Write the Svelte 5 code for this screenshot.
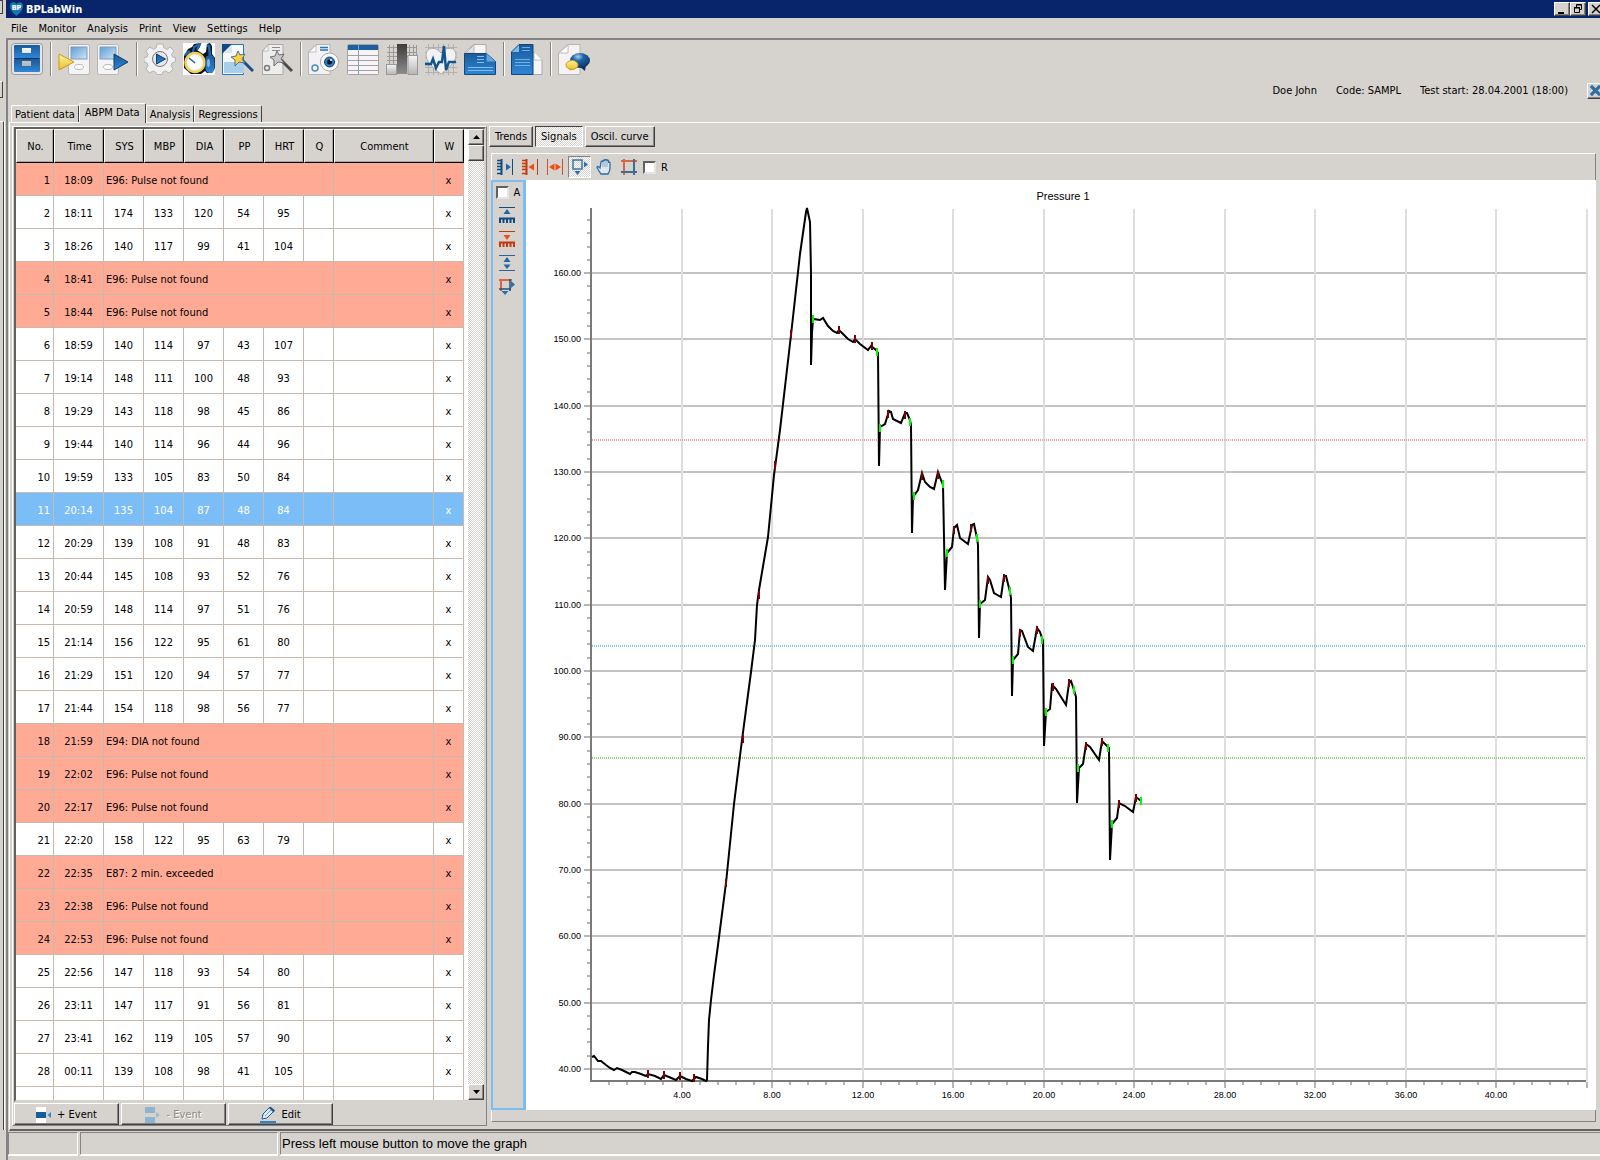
<script lang="ts">
	type Row = {
		no: number;
		time: string;
		values?: number[];
		error?: string;
	};

	const menu = ['File', 'Monitor', 'Analysis', 'Print', 'View', 'Settings', 'Help'];
	const pages = ['Patient data', 'ABPM Data', 'Analysis', 'Regressions'];
	const views = ['Trends', 'Signals', 'Oscil. curve'];
	const numeric = ['SYS', 'MBP', 'DIA', 'PP', 'HRT'];
	const toolbar = [
		'cabinet', '|', 'import', 'export', '|', 'settings', 'monitor', 'wizard', 'wizardGray', '|',
		'preview', 'table', 'histogram', 'signal', 'printout', '|', 'documents', '|', 'comments'
	];

	const notFound = 'E96: Pulse not found';

	const rows: Row[] = [
		{ no: 1, time: '18:09', error: notFound },
		{ no: 2, time: '18:11', values: [174, 133, 120, 54, 95] },
		{ no: 3, time: '18:26', values: [140, 117, 99, 41, 104] },
		{ no: 4, time: '18:41', error: notFound },
		{ no: 5, time: '18:44', error: notFound },
		{ no: 6, time: '18:59', values: [140, 114, 97, 43, 107] },
		{ no: 7, time: '19:14', values: [148, 111, 100, 48, 93] },
		{ no: 8, time: '19:29', values: [143, 118, 98, 45, 86] },
		{ no: 9, time: '19:44', values: [140, 114, 96, 44, 96] },
		{ no: 10, time: '19:59', values: [133, 105, 83, 50, 84] },
		{ no: 11, time: '20:14', values: [135, 104, 87, 48, 84] },
		{ no: 12, time: '20:29', values: [139, 108, 91, 48, 83] },
		{ no: 13, time: '20:44', values: [145, 108, 93, 52, 76] },
		{ no: 14, time: '20:59', values: [148, 114, 97, 51, 76] },
		{ no: 15, time: '21:14', values: [156, 122, 95, 61, 80] },
		{ no: 16, time: '21:29', values: [151, 120, 94, 57, 77] },
		{ no: 17, time: '21:44', values: [154, 118, 98, 56, 77] },
		{ no: 18, time: '21:59', error: 'E94: DIA not found' },
		{ no: 19, time: '22:02', error: notFound },
		{ no: 20, time: '22:17', error: notFound },
		{ no: 21, time: '22:20', values: [158, 122, 95, 63, 79] },
		{ no: 22, time: '22:35', error: 'E87: 2 min. exceeded' },
		{ no: 23, time: '22:38', error: notFound },
		{ no: 24, time: '22:53', error: notFound },
		{ no: 25, time: '22:56', values: [147, 118, 93, 54, 80] },
		{ no: 26, time: '23:11', values: [147, 117, 91, 56, 81] },
		{ no: 27, time: '23:41', values: [162, 119, 105, 57, 90] },
		{ no: 28, time: '00:11', values: [139, 108, 98, 41, 105] }
	];

	let page = $state('ABPM Data');
	let view = $state('Signals');
	let selected = $state(11);
	let autoY = $state(false);
	let rMode = $state(false);

	// Chart geometry, in viewBox units
	const left = 592;
	const right = 1586;
	const top = 209;
	const bottom = 1081;
	const px = (sec: number) => Math.round(591 + sec * 22.625);
	const py = (mm: number) => Math.round(1069 - (mm - 40) * 6.633);

	const yMajor = Array.from({ length: 13 }, (_, i) => 40 + i * 10);
	const yMinor = Array.from({ length: 65 }, (_, i) => 40 + i * 2).filter((v) => v % 10 !== 0 && v <= 168);
	const xMajor = Array.from({ length: 11 }, (_, i) => 4 + i * 4);
	const xMinor = Array.from({ length: 55 }, (_, i) => i + 1).filter((i) => i % 5 !== 0).map((i) => i * 0.8);

	const limits = [
		{ y: 440, color: '#ff9db0' },
		{ y: 646, color: '#86c8e6' },
		{ y: 758, color: '#9bd07c' }
	];

	const trace =
		'592,1057 594,1056 598,1061 601,1061 606,1065 610,1068 614,1070 617,1068 622,1070 630,1074 632,1072 635,1072 641,1074 646,1076 648,1074 655,1076 661,1079 664,1075 669,1077 676,1080 680,1076 686,1079 692,1081 696,1077 702,1079 706,1081 707,1080 ' +
		'708,1046 709,1020 711,1000 714,975 718,945 726,883 734,804 742,740 751,672 755,640 757,605 759,590 768,537 774,475 780,430 791,335 800,254 806,212 807,208 810,222 811,273 811,365 812,333 813,319 ' +
		'820,320 823,318 828,326 833,331 837,333 839,330 842,333 848,339 853,342 855,339 860,344 868,350 871,346 876,350 878,353 879,466 880,427 ' +
		'885,424 889,411 891,412 893,419 901,423 905,413 907,413 910,420 911,425 912,533 913,497 918,490 922,473 925,482 930,487 934,489 938,472 941,480 943,485 945,590 947,553 ' +
		'952,547 954,528 957,525 960,538 968,544 972,525 974,524 977,538 978,545 979,638 980,604 985,600 988,577 990,580 994,593 1001,597 1004,576 1006,576 1010,592 1011,598 1012,696 1013,660 ' +
		'1018,654 1020,630 1022,631 1028,647 1033,651 1037,628 1040,632 1043,641 1044,746 1046,712 1050,709 1052,685 1056,689 1066,705 1069,683 1071,681 1074,690 1076,697 1077,803 1079,768 ' +
		'1083,764 1086,744 1090,747 1099,760 1102,741 1107,746 1109,748 1110,860 1112,824 1117,818 1119,803 1125,806 1133,812 1136,797 1141,801';

	const peaks = [
		[648, 1074], [664, 1075], [680, 1076], [694, 1078], [726, 883], [743, 739], [759, 595], [775, 465], [791, 334],
		[839, 330], [855, 339], [872, 346], [888, 414], [905, 415], [922, 476], [938, 475], [954, 530], [971, 528],
		[988, 580], [1004, 578], [1020, 633], [1037, 630], [1053, 687], [1069, 683], [1086, 746], [1102, 742],
		[1119, 804], [1136, 798]
	];

	const steps = [
		[813, 319], [877, 352], [880, 428], [910, 422], [914, 496], [943, 484], [947, 553], [977, 538], [980, 604],
		[1010, 591], [1013, 660], [1042, 640], [1046, 712], [1074, 690], [1078, 768], [1108, 748], [1112, 824], [1141, 801]
	];
</script>

<svelte:head><title>BPLabWin</title></svelte:head>

{#snippet icon(name: string)}
	<svg class="icon" viewBox="0 0 32 32" aria-hidden="true">
		{#if name === 'cabinet'}
			<rect x="0.5" y="0.5" width="31" height="31" rx="3" fill="#e4e4e4" stroke="#9a9a9a" />
			<rect x="3" y="2" width="26" height="13" rx="1" fill="url(#blue)" />
			<rect x="3" y="16" width="26" height="13" rx="1" fill="url(#blue)" />
			<path d="M11 5h9v5h-9zM11 18h9v5h-9z" fill="url(#silver)" />
			<path d="M3 15.500h26" stroke="#052f5c" />
		{:else if name === 'import' || name === 'export'}
			<g transform={name === 'import' ? 'translate(10 0)' : ''}>
				<rect x="0.500" y="1.500" width="21" height="30" rx="2" fill="#f4f3f5" stroke="#b5b5b8" />
				<rect x="3" y="4" width="16" height="12" fill="url(#screen)" stroke="#7f9bb8" />
				<ellipse cx="11" cy="24" rx="4.500" ry="2.500" fill="#fff" stroke="#bbb" />
			</g>
			{#if name === 'import'}
				<path d="M1 11v16l15-8z" fill="url(#gold)" stroke="#c79a1c" stroke-linejoin="round" />
			{:else}
				<path d="M17 11v16l14-8z" fill="url(#blue)" stroke="#0a3d72" stroke-linejoin="round" />
			{/if}
		{:else if name === 'settings'}
			<path
				d="M13 1h6l1 4 3 1.500L26 4l4 4-2.500 3.500 1 2.500 3 .5v4l-3.500 1.500-1 2.500 2 3.500-4 4-3.500-2-2.500 1-1 2.500h-5l-1.500-2.500-2.500-1-3.500 2-3.500-4 2-3.500-1-2.500-3-1.500v-4l3-.5 1-2.500L2 8l4-4 3.500 2.500L12 5z"
				fill="#f1f0f2" stroke="#b5b5b6"
			/>
			<circle cx="16" cy="16" r="7.500" fill="#e8e8ea" stroke="#77797c" />
			<path d="M12.500 11v10l9-5z" fill="url(#blue)" stroke="#0a3d72" />
		{:else if name === 'monitor'}
			<path d="M0 0h32v32H0z" fill="#fff" />
			<path d="M1 13l4-7 4-2 2-3 7-1-1 4-3 3 6 4 3-2 1-8 3-1 2 3v8l3 4v10l-3 5h-5l-2-2-4 3H8l-7-6z" fill="#081222" />
			<path d="M10 9l1-5 6-3-3 6" fill="none" stroke="#1f6bb0" stroke-width="2" />
			<path d="M24 2l2 1 1 10M2 12l5-4" fill="none" stroke="#1f6bb0" stroke-width="2.500" />
			<circle cx="12" cy="19.500" r="9.500" fill="#eef4fa" stroke="#f3cf52" stroke-width="2.500" />
			<circle cx="12" cy="19.500" r="6.500" fill="#fff" />
			<path d="M6 15l6 5" stroke="#2e5c8a" stroke-width="1.500" />
			<rect x="22.500" y="12" width="9" height="18" rx="4.500" fill="url(#blue)" />
			<ellipse cx="25.500" cy="20" rx="1.500" ry="4" fill="#7db8ea" />
		{:else if name === 'wizard' || name === 'wizardGray'}
			{@const on = name === 'wizard'}
			<path d={on ? 'M.5 1.500h21v30H.5z' : 'M7 1.500h15v30H1.500V8z'} fill={on ? '#f7f8fb' : '#ededee'} stroke={on ? '#2a76b8' : '#a9a9aa'} />
			{#if on}
				<path d="M0 1h10L1 10H0z" fill="#0f4a85" />
				<path d="M10 2v8H2z" fill="#dde3ea" />
				<path d="M2 19h20v11H2z" fill="#a9cdec" />
			{:else}
				<path d="M7 2v6H2z" fill="#fff" stroke="#bbb" />
				<path d="M11 4.500h8M11 7.500h8" stroke="#8b8b8b" />
				<circle cx="6" cy="25" r="2.500" fill="none" stroke="#7b7b7b" stroke-width="1.500" />
			{/if}
			<path d="M20 17l11 11" stroke={on ? '#174f88' : '#4b4b4b'} stroke-width="3" />
			<path
				d="M16 8l2 4 5-1-3 5 3 4-6-1-4 4v-6l-4-3 5-1z"
				fill={on ? '#f6d23e' : '#c9c9c9'} stroke={on ? '#56718a' : '#6e6e6e'}
			/>
		{:else if name === 'preview'}
			<path d="M8 1.500h14v30H.5V9z" fill="#f3f1f4" stroke="#b5b5b8" />
			<path d="M8 2v7H1z" fill="#fff" stroke="#bcbcbc" />
			<path d="M12 4.500h8M12 7h8" stroke="#2a76b0" stroke-width="1.500" />
			<circle cx="7" cy="25" r="3" fill="none" stroke="#4c8fc0" stroke-width="1.500" />
			<circle cx="21.500" cy="19" r="9" fill="#fff" stroke="#aaa" />
			<circle cx="21.500" cy="19" r="5" fill="#2f7fc0" stroke="#0f3f70" />
			<circle cx="21.500" cy="19" r="2.500" fill="#0a1620" />
			<circle cx="23" cy="17" r="1" fill="#fff" />
		{:else if name === 'table'}
			<rect x="0.500" y="1.500" width="31" height="30" rx="1" fill="#f6f4f6" stroke="#a3a3a6" />
			<path d="M1 2h30v5H1z" fill="#1c609f" />
			<path d="M1 12.500h30M1 17.500h30M1 22.500h30M1 27.500h30" stroke="#a3a3a6" />
			<path d="M11.500 2v29" stroke="#8ca0b4" />
		{:else if name === 'histogram'}
			<path d="M3.500 2v22M7.500 2v22M23.500 2v12M27.500 2v12M30.500 2v12M1 4.500h30M1 9.500h30M1 13.500h30M1 17.500h10" stroke="#9c9a98" />
			<rect x="0.500" y="21.500" width="10" height="10" fill="url(#silver)" stroke="#999" />
			<rect x="22" y="12.500" width="9.500" height="19" fill="url(#silver)" stroke="#999" />
			<rect x="11" y="1" width="10" height="30" fill="url(#dark)" />
		{:else if name === 'signal'}
			<path d="M3.500 1v31M8.500 1v31M13.500 1v31M18.500 1v31M23.500 1v31M28.500 1v31M0 4.500h32M0 9.500h32M0 14.500h32M0 19.500h32M0 24.500h32M0 29.500h32" stroke="#b3b0ad" />
			<path d="M16 31C5 23 1 17 1 12c0-8 10-9 15-2 5-7 15-6 15 2 0 5-4 11-15 19z" fill="#f2f2f4" stroke="#aaa" />
			<path d="M0 21h6l2-5 3 9 3-6h3l2-16 2 24 3-8h7" fill="none" stroke="#11568f" stroke-width="2.500" />
		{:else if name === 'printout'}
			<path d="M10 1.500h12v12H1V9z" fill="#f6f5f7" stroke="#aaa" />
			<path d="M10 2v8H2z" fill="#e3e3e6" stroke="#bbb" />
			<path d="M.5 10.500h22l9 8v13H.5z" fill="url(#blue)" stroke="#11477c" />
			<path d="M22.500 10.500v8h9z" fill="#5fa7de" />
			<path d="M13 13.500h7M13 16.500h7M13 19.500h7M4 24.500h25M4 27.500h25" stroke="#7cc0f0" />
		{:else if name === 'documents'}
			<path d="M18 9h5l8 8v14.500H18z" fill="#f6f5f7" stroke="#aaa" />
			<path d="M23 9v8h8" fill="#fff" stroke="#bbb" />
			<path d="M8 1.500h14v30H.5V9z" fill="url(#blue)" stroke="#11477c" />
			<path d="M8 2v7H1z" fill="#7fb9e6" />
			<path d="M11 4.500h8M11 7.500h8M4 16.500h15M4 19.500h15M4 22.500h15" stroke="#6db2e6" />
		{:else if name === 'comments'}
			<path d="M10 1.500h12v30H.5V10z" fill="#f4f2f5" stroke="#b5b5b8" />
			<path d="M10 2v8H1z" fill="#fff" stroke="#bcbcbc" />
			<path d="M28 22l-1 6-5-4z" fill="#0d3766" />
			<ellipse cx="22" cy="17.500" rx="10" ry="7.500" fill="url(#ball)" />
			<path d="M11 24l1 4 4-4z" fill="#d9a914" />
			<ellipse cx="14" cy="22" rx="6" ry="4.500" fill="url(#gold)" stroke="#c79a1c" />
		{/if}
	</svg>
{/snippet}

{#snippet small(name: string)}
	<svg class="small-icon" viewBox="0 0 16 16" aria-hidden="true">
		{#if name === 'xLeft' || name === 'xRight'}
			{@const c = name === 'xLeft' ? '#0f4a80' : '#c8370a'}
			<path d="M0 1.500h5M0 4.500h5M0 7.500h5M0 10.500h5M0 14.500h5" stroke={c} stroke-width="1.500" />
			<path d="M4.500 0v16" stroke={c} stroke-width="2" />
			<path d="M15.500 0v16" stroke={c} />
			{#if name === 'xLeft'}
				<path d="M9 4.500v7l5-3.500z" fill="#1d68ad" />
			{:else}
				<path d="M12 4.500v7L6.500 8z" fill="#f04d10" />
			{/if}
		{:else if name === 'xFit'}
			<path d="M.5 0v16M15.500 0v16" stroke="#d2512c" />
			<path d="M7.500 4.500v7L2 8zM8.500 4.500v7L14 8z" fill="#f04d10" />
		{:else if name === 'move'}
			<rect x="1" y="1" width="9" height="9" fill="none" stroke="#3777ad" stroke-width="1.500" />
			<path d="M12 2.500v6L16 5.500zM2.500 12h6L5.500 16z" fill="#2b70ad" />
		{:else if name === 'hand'}
			<path
				d="M4 9L2 7.500C1 7.500.8 8.500 1.500 9.500L5 15h7c1.500-2 2-4 2-6V4c0-1-1.500-1-1.500 0V2c0-1-1.700-1-1.700 0V1c0-1-1.800-1-1.800 0v1C9 1 7 1 7 2v1c0-1-2-1-2 0z"
				fill="#dfe6ec" stroke="#2f6ea5" stroke-width="1.300"
			/>
			<path d="M7 3v5M9 2v6M11 2v6" stroke="#6f9cc2" stroke-width="0.800" />
		{:else if name === 'crop'}
			<path d="M3 0v16M0 2h16" stroke="#d4664a" stroke-width="2" />
			<path d="M13 0v16M0 13h16" stroke="#3c6d98" stroke-width="2" />
		{:else if name === 'yTop' || name === 'yBottom'}
			{@const c = name === 'yTop' ? '#0f4a80' : '#c8370a'}
			<path d="M0 .5h16" stroke={c} />
			<path d="M1 11v5M4.500 11v5M8 11v5M11.500 11v5M15 11v5" stroke={c} stroke-width="2" />
			<path d="M0 11.500h16" stroke={c} stroke-width="2" />
			<path d={name === 'yTop' ? 'M4.500 7h7L8 2z' : 'M4.500 4h7L8 9z'} fill={name === 'yTop' ? '#1d68ad' : '#f04d10'} />
		{:else if name === 'yFit'}
			<path d="M0 .5h16M0 15.500h16" stroke="#31628f" />
			<path d="M4.500 7h7L8 2zM4.500 9.500h7L8 14z" fill="#1d68ad" />
		{:else if name === 'zoomMove'}
			<path d="M2 0v12M0 1h13" stroke="#d4664a" stroke-width="2" />
			<path d="M11 0v12M0 10h12" stroke="#274f76" stroke-width="1.500" />
			<path d="M12 2v7L16 5.500zM2.500 12h7L6 16z" fill="#2b70ad" />
		{:else if name === 'addEvent'}
			<path d="M0 0h10v5H0zM0 11h10v5H0z" fill="#fff" />
			<path d="M0 5h10v6H0z" fill="#155d9c" />
			<path d="M15 5v6l-3.500-3z" fill="#3e87c3" />
		{:else if name === 'removeEvent'}
			<path d="M0 0h10v6H0zM0 10h10v6H0z" fill="#8fb4d2" />
			<path d="M15 8l-4-3v6z" fill="#9dbbd3" />
		{:else if name === 'edit'}
			<path d="M0 15h16" stroke="#2f83c8" stroke-width="2" />
			<path d="M2 12l1-5 7-7 4 4-7 7z" fill="#dfeaf4" stroke="#1d5c96" />
			<path d="M9 1l2-1 4 3.500-1.500 2z" fill="#15548f" />
			<path d="M5 9l6-6" stroke="#6ca0cf" />
		{/if}
	</svg>
{/snippet}

<!-- Shared gradients -->
<svg class="defs" width="0" height="0" aria-hidden="true">
	<defs>
		<linearGradient id="blue" x1="0" y1="0" x2="0" y2="1">
			<stop offset="0" stop-color="#1a5a98" />
			<stop offset="1" stop-color="#2f86d6" />
		</linearGradient>
		<linearGradient id="screen" x1="0" y1="0" x2="1" y2="1">
			<stop offset="0" stop-color="#5f9fd6" />
			<stop offset="1" stop-color="#cfe4f6" />
		</linearGradient>
		<linearGradient id="gold" x1="0" y1="0" x2="0" y2="1">
			<stop offset="0" stop-color="#fff0a0" />
			<stop offset="1" stop-color="#eebf22" />
		</linearGradient>
		<linearGradient id="silver" x1="0" y1="0" x2="0" y2="1">
			<stop offset="0" stop-color="#f6f6f6" />
			<stop offset="1" stop-color="#b4b4b4" />
		</linearGradient>
		<linearGradient id="dark" x1="0" y1="0" x2="0" y2="1">
			<stop offset="0" stop-color="#3c3c3c" />
			<stop offset="1" stop-color="#8c8c8c" />
		</linearGradient>
		<radialGradient id="ball" cx="0.4" cy="0.25" r="0.8">
			<stop offset="0" stop-color="#a9d0f0" />
			<stop offset="0.35" stop-color="#1f64a6" />
			<stop offset="1" stop-color="#0b315c" />
		</radialGradient>
	</defs>
</svg>

<div class="desktop">
	<!-- edge of the window behind -->
	<div class="behind">
		<div class="stub"></div>
		<div class="stub second"></div>
		<div class="edge"></div>
	</div>

	<div class="window">
		<header class="title-bar">
			<svg class="logo" viewBox="0 0 13 14" aria-hidden="true">
				<path d="M6.500 14C2 10 0 7 0 4c0-4 4-5 6.500-2C9 -1 13 0 13 4c0 3-2 6-6.500 10z" fill="#1678b4" />
				<path d="M2 3h9v5H2z" fill="#5db4de" opacity="0.5" />
				<text x="6.500" y="8" text-anchor="middle">BP</text>
			</svg>
			<h1>BPLabWin</h1>
			<div class="window-buttons">
				<button class="raised" aria-label="Minimize">
					<svg viewBox="0 0 12 10"><path d="M2 8h6v2H2z" /></svg>
				</button>
				<button class="raised" aria-label="Restore">
					<svg viewBox="0 0 12 10"><path d="M4.500 3V.5h5v5H7.500M4 1h6M2.500 3.500h5v5h-5zM2 4h6" fill="none" stroke="#000" /></svg>
				</button>
				<button class="raised close" aria-label="Close">
					<svg viewBox="0 0 12 10"><path d="M2 1l8 8M10 1L2 9" stroke="#000" stroke-width="1.500" /></svg>
				</button>
			</div>
		</header>

		<nav class="menu">
			{#each menu as item}
				<button>{item}</button>
			{/each}
		</nav>

		<div class="body">
			<div class="toolbar">
				{#each toolbar as name}
					{#if name === '|'}
						<span class="sep"></span>
					{:else}
						<button aria-label={name}>{@render icon(name)}</button>
					{/if}
				{/each}
			</div>

			<div class="patient">
				<span>Doe John</span>
				<span>Code: SAMPL</span>
				<span>Test start: 28.04.2001 (18:00)</span>
				<button class="raised" aria-label="Close test">
					<svg viewBox="0 0 14 14"><path d="M2 2l10 10M12 2L2 12" stroke="#2a6fa8" stroke-width="3.500" /></svg>
				</button>
			</div>

			<div class="tabs" role="tablist">
				{#each pages as p}
					<button role="tab" aria-selected={page === p} class:active={page === p} onclick={() => (page = p)}>{p}</button>
				{/each}
			</div>

			<main class="panel">
				<section class="list">
					<div class="listbox">
						<div class="table-wrap">
							<table>
								<colgroup>
									<col class="c-no" />
									<col class="c-time" />
									{#each numeric as n}<col class="c-num" />{/each}
									<col class="c-q" />
									<col class="c-comment" />
									<col class="c-w" />
								</colgroup>
								<thead>
									<tr>
										<th>No.</th>
										<th>Time</th>
										{#each numeric as n}<th>{n}</th>{/each}
										<th>Q</th>
										<th>Comment</th>
										<th>W</th>
									</tr>
								</thead>
								<tbody>
									{#each rows as r (r.no)}
										<tr class:error={r.error} class:selected={r.no === selected} onclick={() => (selected = r.no)}>
											<td class="no">{r.no}</td>
											<td>{r.time}</td>
											{#if r.values}
												{#each r.values as v}<td>{v}</td>{/each}
												<td></td>
											{:else}
												<td class="message" colspan="6">{r.error}</td>
											{/if}
											<td></td>
											<td>x</td>
										</tr>
									{/each}
									<tr>
										{#each { length: 10 } as _}<td></td>{/each}
									</tr>
								</tbody>
							</table>
						</div>
						<div class="scrollbar">
							<button class="raised" aria-label="Scroll up"><svg viewBox="0 0 7 4"><path d="M0 4h7L3.500 0z" /></svg></button>
							<div class="thumb raised"></div>
							<div class="track"></div>
							<button class="raised" aria-label="Scroll down"><svg viewBox="0 0 7 4"><path d="M0 0h7L3.500 4z" /></svg></button>
						</div>
					</div>
					<div class="event-buttons">
						<button class="raised">{@render small('addEvent')} + Event</button>
						<button class="raised" disabled>{@render small('removeEvent')} - Event</button>
						<button class="raised">{@render small('edit')} Edit</button>
					</div>
				</section>

				<section class="graph">
					<div class="views" role="tablist">
						{#each views as v}
							<button role="tab" aria-selected={view === v} class="raised" class:pressed={view === v} onclick={() => (view = v)}>{v}</button>
						{/each}
					</div>

					<div class="graph-panel">
						<div class="graph-tools">
							<button aria-label="Move left edge">{@render small('xLeft')}</button>
							<button aria-label="Move right edge">{@render small('xRight')}</button>
							<button aria-label="Fit width">{@render small('xFit')}</button>
							<button aria-label="Move graph" class="down">{@render small('move')}</button>
							<button aria-label="Pan">{@render small('hand')}</button>
							<button aria-label="Select area">{@render small('crop')}</button>
							<label><input type="checkbox" bind:checked={rMode} />R</label>
						</div>

						<div class="graph-area">
							<aside>
								<label><input type="checkbox" bind:checked={autoY} />A</label>
								<button aria-label="Move top edge">{@render small('yTop')}</button>
								<button aria-label="Move bottom edge">{@render small('yBottom')}</button>
								<button aria-label="Fit height">{@render small('yFit')}</button>
								<button aria-label="Zoom and move">{@render small('zoomMove')}</button>
							</aside>

							<div class="plot">
								<svg viewBox="526 180 1070 930" preserveAspectRatio="xMinYMin meet" role="img" aria-label="Pressure 1">
									<text class="chart-title" x="1063" y="200" text-anchor="middle">Pressure 1</text>

									{#each yMajor as v}
										<line class="grid-h" x1={left} x2={right} y1={py(v)} y2={py(v)} />
										<line class="tick" x1="584" x2="590" y1={py(v)} y2={py(v)} />
										<text class="label" x="581" y={py(v) + 3} text-anchor="end">{v.toFixed(2)}</text>
									{/each}
									{#each yMinor as v}
										<line class="tick" x1="587" x2="590" y1={py(v)} y2={py(v)} />
									{/each}
									{#each xMajor as v}
										<line class="grid-v" x1={px(v)} x2={px(v)} y1={top} y2={bottom} />
										<line class="tick" x1={px(v)} x2={px(v)} y1="1082" y2="1088" />
										{#if v < 44}
											<text class="label" x={px(v)} y="1098" text-anchor="middle">{v.toFixed(2)}</text>
										{/if}
									{/each}
									{#each xMinor as v}
										<line class="tick" x1={px(v)} x2={px(v)} y1="1082" y2="1085" />
									{/each}

									{#each limits as l}
										<line class="limit" x1={left} x2={right} y1={l.y} y2={l.y} stroke={l.color} />
									{/each}

									<path class="axis" d="M591 208V1081H1586" />
									<polyline class="trace" points={trace} />
									{#each peaks as [x, y]}
										<rect x={x - 1} y={y - 4} width="2" height="8" fill="#7b0000" />
									{/each}
									{#each steps as [x, y]}
										<rect x={x - 1} y={y - 4} width="2" height="8" fill="#00f700" />
									{/each}
								</svg>
							</div>
						</div>
						<div class="graph-foot"></div>
					</div>
				</section>
			</main>

			<footer class="status">
				<span></span>
				<span></span>
				<span>Press left mouse button to move the graph</span>
			</footer>
		</div>
	</div>
</div>

<style>
	:global(body) {
		background: #d6d3ce;
		font-family: 'DejaVu Sans Condensed', 'Noto Sans', sans-serif;
		font-size: 11px;
		line-height: 14px;
		color: #000;
		overflow: hidden;
	}
	button {
		font: inherit;
		color: inherit;
		padding: 0;
		border: 0;
		background: none;
		display: flex;
		align-items: center;
		justify-content: center;
	}
	svg { display: block; }
	.defs { position: absolute; }

	.raised {
		background: #d6d3ce;
		border: 1px solid;
		border-color: #fff #424142 #424142 #fff;
		box-shadow: inset -1px -1px #848284;
		box-sizing: border-box;
	}

	.desktop { display: flex; height: 100vh; }

	.behind { width: 6px; flex: none; display: flex; flex-direction: column; background: #d6d3ce; }
	.stub { width: 3px; height: 14px; border: 1px solid #424142; border-left: 0; box-sizing: border-box; }
	.stub.second { height: 17px; margin: 67px 0 23px; border-top-color: #fff; }
	.edge { flex: 1; width: 3px; border-top: 1px solid #fff; border-right: 1px solid #424142; box-shadow: 1px 0 #fff; margin-bottom: 30px; }

	/* The window runs a few pixels past the right side of the screen */
	.window { flex: 1; min-width: 0; display: flex; flex-direction: column; margin-right: -4px; }

	.title-bar {
		height: 18px;
		display: flex;
		align-items: center;
		gap: 3px;
		padding-left: 4px;
		background: #08246b;
		color: #fff;
	}
	.title-bar h1 { font-size: 11px; line-height: 16px; font-weight: bold; margin: 0; padding-top: 1px; flex: 1; }
	.logo { width: 13px; height: 14px; }
	.logo text { font-size: 7px; font-weight: bold; fill: #fff; }
	.window-buttons { display: flex; color: #000; }
	.window-buttons button { width: 16px; height: 14px; }
	.window-buttons svg { width: 12px; height: 10px; }
	.window-buttons .close { margin-left: 2px; }

	.menu {
		height: 20px;
		box-sizing: border-box;
		display: flex;
		align-items: center;
		gap: 11px;
		padding: 1px 0 0 5px;
	}

	.body {
		flex: 1;
		min-height: 0;
		display: flex;
		flex-direction: column;
		border-top: 2px solid #848284;
		border-left: 2px solid #848284;
	}

	.toolbar { display: flex; align-items: center; gap: 7px; height: 37px; padding-left: 3px; }
	.icon { width: 32px; height: 32px; }
	.sep { width: 1px; height: 34px; background: #848284; box-shadow: 1px 0 #fff; }

	.patient { display: flex; justify-content: flex-end; align-items: center; gap: 19px; height: 27px; }
	.patient button { width: 17px; height: 16px; }
	.patient svg { width: 13px; height: 13px; }

	.tabs { display: flex; align-items: flex-end; height: 18px; padding-left: 3px; }
	.tabs button {
		height: 17px;
		padding: 1px 3px 0;
		border: 1px solid;
		border-color: #fff #424142 transparent #fff;
		border-bottom: 0;
		border-radius: 2px 2px 0 0;
	}
	.tabs button.active { height: 20px; margin-bottom: -1px; padding: 0 5px 2px; background: #d6d3ce; position: relative; }

	.panel {
		flex: 1;
		min-height: 0;
		display: flex;
		margin-left: 1px;
		padding: 3px 8px 3px 2px;
		border: 1px solid #fff;
		border-width: 1px 0 0 1px;
		border-bottom: 2px solid #63615f;
	}

	.list {
		width: 475px;
		flex: none;
		box-sizing: border-box;
		display: flex;
		flex-direction: column;
		border: 1px solid;
		border-color: #fff #848284 #848284 #fff;
		padding-left: 1px;
	}
	.listbox {
		flex: 1;
		min-height: 0;
		display: flex;
		background: #fff;
		border: 2px solid;
		border-color: #63615f #d6d3ce #d6d3ce #63615f;
	}
	.table-wrap { flex: 1; overflow: hidden; }
	table { width: 448px; table-layout: fixed; border-collapse: separate; border-spacing: 0; text-align: center; }
	.c-no { width: 38px; }
	.c-time { width: 50px; }
	.c-num { width: 40px; }
	.c-q { width: 30px; }
	.c-comment { width: 100px; }
	.c-w { width: 30px; }
	th {
		height: 34px;
		box-sizing: border-box;
		padding: 2px 0 0 1px;
		font-weight: normal;
		background: #d6d3ce;
		border: 1px solid;
		border-color: #fff #000 #000 #fff;
		box-shadow: inset -1px -1px #aaa7a2;
	}
	td {
		height: 33px;
		box-sizing: border-box;
		padding: 3px 0 0;
		border: 1px solid #c6bab0;
		border-width: 0 1px 1px 0;
	}
	td.no { text-align: right; padding-right: 3px; }
	td.message { text-align: left; padding-left: 2px; }
	tr.error td { background: #ffaa94; border-color: #c6bab0; }
	tr.selected td { background: #7bbef7; color: #fff; }

	.scrollbar { width: 16px; display: flex; flex-direction: column; }
	.scrollbar button, .thumb { width: 16px; height: 16px; flex: none; }
	.scrollbar svg { width: 7px; height: 4px; }
	.track, .pressed, .down {
		background: repeating-conic-gradient(#fff 0 25%, #d6d3ce 0 50%) 0 0 / 2px 2px;
	}
	.track { flex: 1; }

	.event-buttons { display: flex; gap: 2px; padding-top: 1px; height: 22px; }
	.event-buttons button { width: 105px; gap: 5px; padding-top: 1px; }
	.event-buttons button:disabled { color: #8c8a86; text-shadow: 1px 1px #fff; }
	.small-icon { width: 16px; height: 16px; flex: none; }

	.graph { flex: 1; min-width: 0; display: flex; flex-direction: column; padding: 0 0 4px 2px; }
	.views { display: flex; gap: 2px; height: 21px; }
	.views button { padding: 0 5px; }
	.views .pressed { border-color: #424142 #fff #fff #424142; box-shadow: none; }

	.graph-panel {
		flex: 1;
		min-height: 0;
		display: flex;
		flex-direction: column;
		margin: 6px 0 0 2px;
		border: 1px solid;
		border-color: #fff #848284 #848284 #fff;
	}
	.graph-tools { display: flex; align-items: center; height: 26px; }
	.graph-tools button { width: 25px; height: 22px; }
	.graph-tools .down {
		width: 23px;
		margin-left: 1px;
		border: 1px solid;
		border-color: #848284 #fff #fff #848284;
		box-sizing: border-box;
	}
	label { display: flex; align-items: center; gap: 5px; }
	.graph-tools label { margin-left: 2px; padding-top: 1px; }
	input[type='checkbox'] {
		appearance: none;
		width: 13px;
		height: 13px;
		margin: 0;
		background: #fff;
		border: 2px solid;
		border-color: #63615f #e7e3de #e7e3de #63615f;
		box-sizing: border-box;
	}

	.graph-area { flex: 1; min-height: 0; display: flex; margin: 0 -1px; }
	aside {
		width: 35px;
		flex: none;
		box-sizing: border-box;
		display: flex;
		flex-direction: column;
		align-items: center;
		gap: 8px;
		padding-top: 4px;
		border: 2px solid #7bbef7;
		border-right-width: 3px;
	}
	aside label { height: 13px; }
	aside button { padding-right: 2px; }
	.plot { flex: 1; min-width: 0; background: #fff; }
	.plot svg { width: 100%; height: 100%; }
	.graph-foot { height: 11px; flex: none; }

	.chart-title { font: 11px 'Liberation Sans', Arial, sans-serif; }
	.label { font: 9px 'Liberation Sans', Arial, sans-serif; }
	.grid-h { stroke: #808080; stroke-opacity: 0.47; stroke-width: 2; }
	.grid-v { stroke: #dedede; stroke-width: 2; }
	.tick { stroke: #b5b5b5; stroke-width: 2; }
	.axis { fill: none; stroke: #7b7b7b; stroke-width: 2; }
	.limit { stroke-width: 2; stroke-dasharray: 1 1; }
	.trace { fill: none; stroke: #000; stroke-width: 2; }

	.status {
		display: flex;
		gap: 2px;
		height: 23px;
		padding: 1px 0 5px;
		font: 13px 'Liberation Sans', Arial, sans-serif;
	}
	.status span {
		box-sizing: border-box;
		padding: 3px 1px 0;
		border: 1px solid;
		border-color: #848284 #fff #fff #848284;
		box-shadow: 0 1px #fff;
	}
	.status span:nth-child(1) { width: 70px; }
	.status span:nth-child(2) { width: 198px; }
	.status span:nth-child(3) { flex: 1; }
</style>
